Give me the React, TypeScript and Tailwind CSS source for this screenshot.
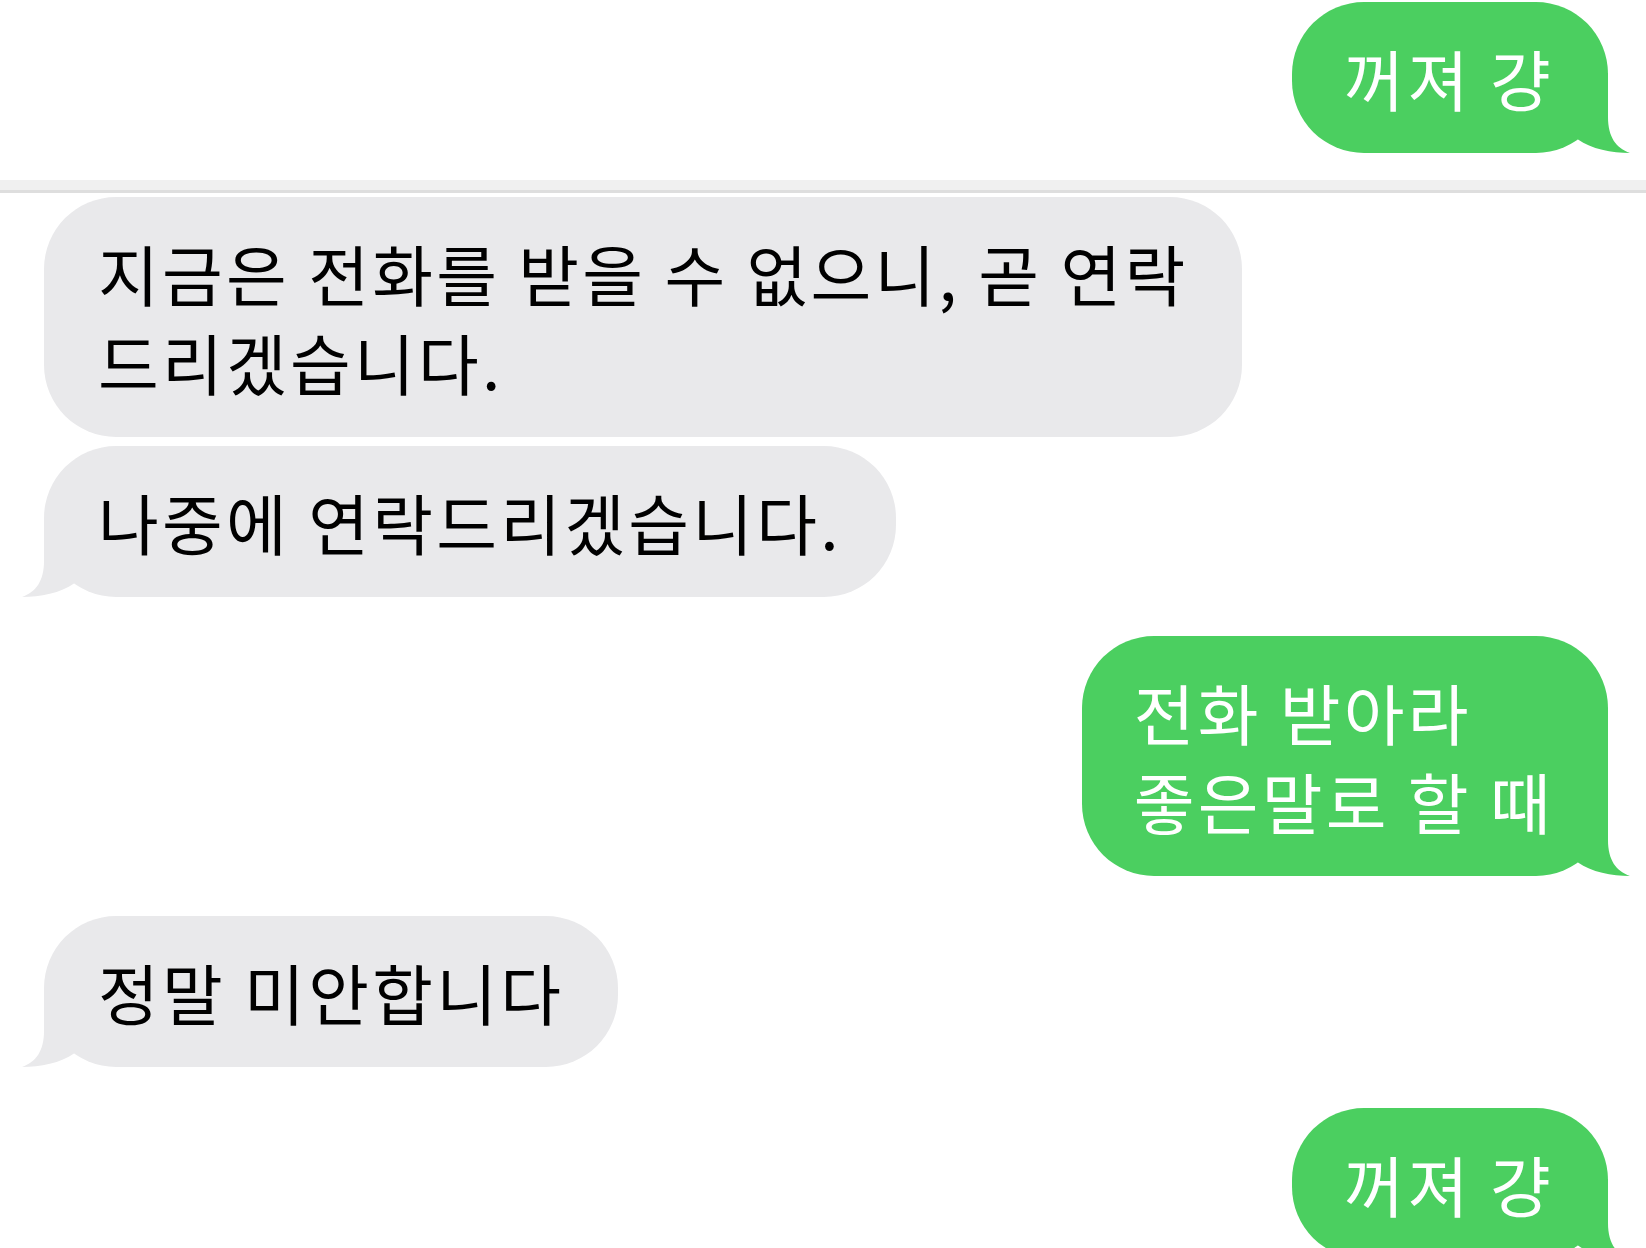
import React from "react";
import clsx from "clsx";

type Side = "me" | "them";

const Tail = ({ side, color }: { side: Side; color: string }) => (
  <svg
    viewBox="0 0 52 80"
    className={clsx(
      "absolute bottom-0 w-[52px] h-[80px]",
      side === "me" ? "right-[-22px]" : "left-[-22px] -scale-x-100"
    )}
  >
    <path d="M0,0 H30 V44 C30,64 38,75 52,80 C34,80 13,76 0,66.5 Z" fill={color} />
  </svg>
);

const Bubble = ({
  side,
  tail = true,
  className,
  children,
}: {
  side: Side;
  tail?: boolean;
  className?: string;
  children: React.ReactNode;
}) => (
  <div
    className={clsx(
      "relative rounded-[72px] py-[31px] text-[66px] leading-[89px] tracking-[0.05em] whitespace-nowrap",
      side === "me"
        ? "self-end mr-[38px] pl-[52px] pr-[54px] bg-[#4bcf60] text-white"
        : "self-start ml-[44px] px-[54px] bg-[#e9e9eb] text-black",
      className
    )}
  >
    {children}
    {tail && <Tail side={side} color={side === "me" ? "#4bcf60" : "#e9e9eb"} />}
  </div>
);

export default function App() {
  return (
    <div className="w-full h-[1248px] overflow-hidden bg-white font-['Noto_Sans_CJK_KR',sans-serif]">
      <div className="flex flex-col pt-[2px]">
        <Bubble side="me">꺼져 걍</Bubble>

        {/* screenshot seam */}
        <div className="mt-[27px] h-[13px] bg-[#f0f0f0] border-b-[3px] border-[#dedede]" />

        <Bubble side="them" tail={false} className="mt-[4px]">
          지금은 전화를 받을 수 없으니, 곧 연락
          <br />
          드리겠습니다.
        </Bubble>
        <Bubble side="them" className="mt-[9px]">
          나중에 연락드리겠습니다.
        </Bubble>

        <Bubble side="me" className="mt-[39px]">
          전화 받아라
          <br />
          좋은말로 할 때
        </Bubble>

        <Bubble side="them" className="mt-[40px]">
          정말 미안합니다
        </Bubble>

        <Bubble side="me" className="mt-[41px]">
          꺼져 걍
        </Bubble>
      </div>
    </div>
  );
}
